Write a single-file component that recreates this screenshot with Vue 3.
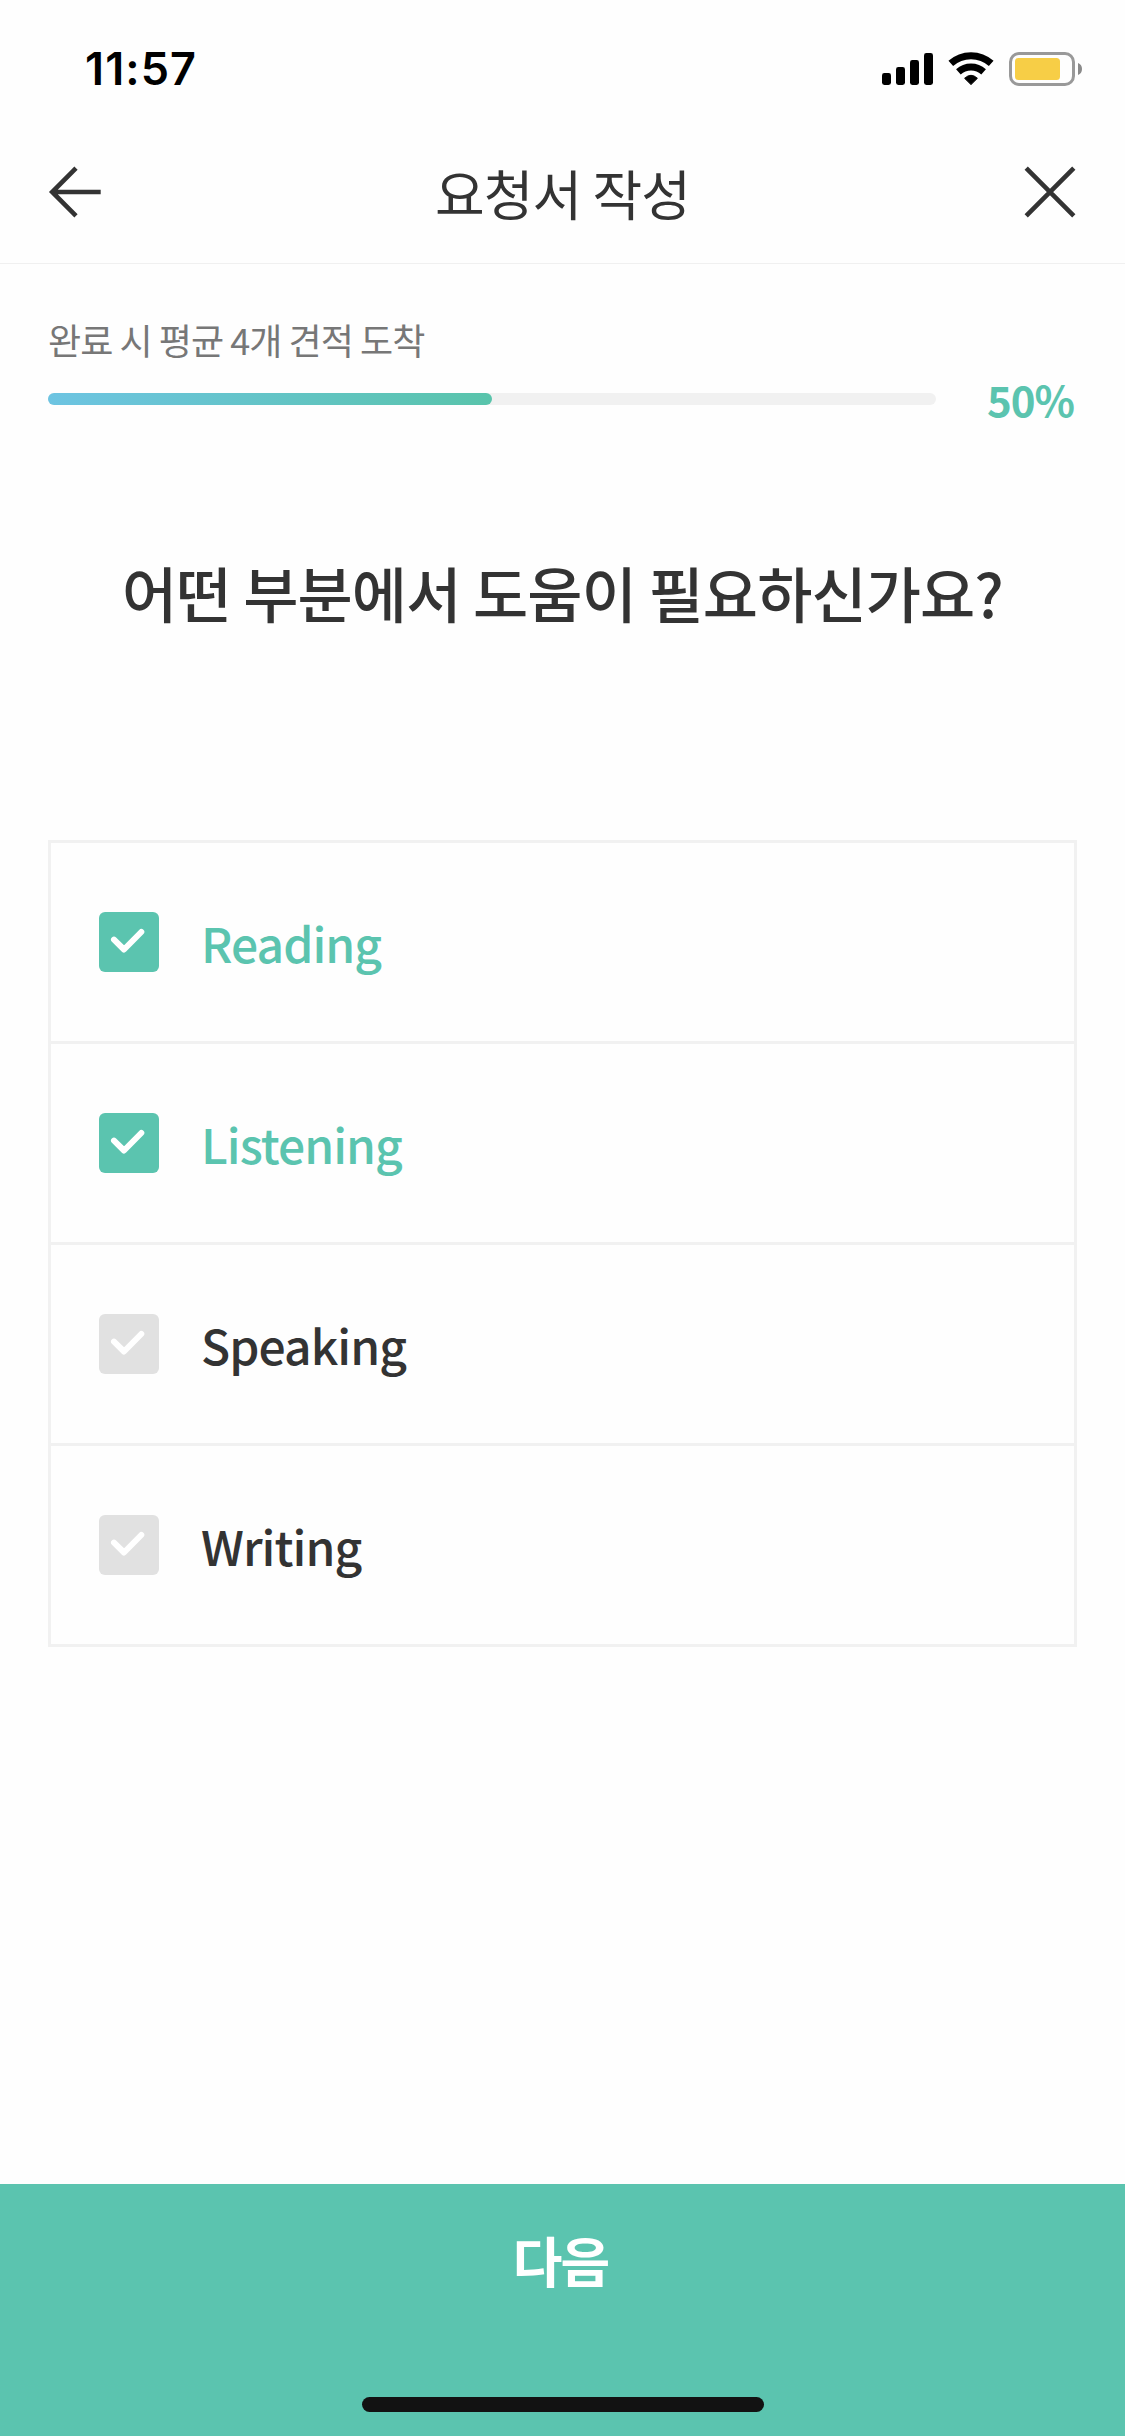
<script setup>
import { ref } from 'vue'

const progress = ref(50)
const options = ref([
  { label: 'Reading', checked: true },
  { label: 'Listening', checked: true },
  { label: 'Speaking', checked: false },
  { label: 'Writing', checked: false },
])
</script>

<template>
  <div class="screen">
    <div class="status">
      <span class="time">11:57</span>
      <svg class="indicators" width="202" height="36" viewBox="881 51 202 36">
        <rect x="882" y="73" width="9" height="12" rx="2.4" />
        <rect x="896" y="67" width="9" height="18" rx="2.4" />
        <rect x="910" y="60" width="9" height="25" rx="2.4" />
        <rect x="924" y="53" width="9" height="32" rx="2.4" />
        <g fill="none" stroke="#000" stroke-width="7">
          <path d="M950.8 63.4A30.2 30.2 0 0 1 991.2 63.4" />
          <path d="M958.4 71.9A19 19 0 0 1 983.6 71.9" />
        </g>
        <path d="M971 84.6L964.6 78.3Q971 72.3 977.4 78.3Z" stroke="#000" stroke-width="1" stroke-linejoin="round" />
        <rect x="1010.5" y="53.5" width="63" height="31" rx="8.5" fill="none" stroke="#999" stroke-width="3" />
        <rect x="1015" y="58" width="45" height="22" rx="3.5" fill="#f7ce46" />
        <path d="M1078 63Q1082 64.500 1082 69T1078 75Z" fill="#8a8a8a" />
      </svg>
    </div>

    <header class="nav">
      <svg width="54" height="54" viewBox="0 0 54 54">
        <path d="M28 3.200L4.200 27L28 50.800M4.500 27H52.700" fill="none" stroke="#333" stroke-width="4.600" />
      </svg>
      <h1>요청서 작성</h1>
      <svg width="54" height="54" viewBox="0 0 54 54">
        <path d="M3.200 3.200L50.800 50.800M50.800 3.200L3.200 50.800" fill="none" stroke="#333" stroke-width="4.600" />
      </svg>
    </header>

    <section class="progress">
      <p class="note">완료 시 평균 4개 견적 도착</p>
      <div class="meter">
        <div class="track"><div class="fill" :style="{ width: progress + '%' }"></div></div>
        <span class="percent">{{ progress }}%</span>
      </div>
    </section>

    <h2>어떤 부분에서 도움이 필요하신가요?</h2>

    <ul class="options">
      <li
        v-for="option in options"
        :key="option.label"
        :class="{ checked: option.checked }"
        @click="option.checked = !option.checked"
      >
        <svg class="box" width="60" height="60" viewBox="0 0 60 60">
          <rect class="square" width="60" height="60" rx="6" />
          <path d="M15 27.700L25 37.500L42.300 20" fill="none" stroke="#fff" stroke-width="6" stroke-linecap="round" stroke-linejoin="round" />
        </svg>
        <span class="label">{{ option.label }}</span>
      </li>
    </ul>

    <footer>
      <button type="button">다음</button>
      <div class="home"></div>
    </footer>
  </div>
</template>

<style>
body {
  margin: 0;
  background: #fefefe;
}
</style>

<style scoped>
.screen {
  display: flex;
  flex-direction: column;
  width: 1125px;
  height: 2436px;
  background: #fefefe;
  color: #333;
  font-family: 'Noto Sans CJK KR', sans-serif;
}
.status {
  display: flex;
  justify-content: space-between;
  align-items: center;
  box-sizing: border-box;
  height: 132px;
  padding: 6px 42px 0 85px;
}
.time {
  font: 600 45px/54px Inter, sans-serif;
  letter-spacing: 1.1px;
  color: #000;
}
.nav {
  display: flex;
  justify-content: space-between;
  align-items: center;
  box-sizing: border-box;
  height: 132px;
  padding: 0 48px 11px;
  border-bottom: 1px solid #f0f0f0;
}
h1 {
  margin: 2px 0 0;
  font-size: 54px;
  line-height: 80px;
  font-weight: 400;
  letter-spacing: -0.9px;
}
.progress {
  padding: 48px 48px 0;
}
.note {
  margin: 0;
  font-size: 36px;
  line-height: 54px;
  letter-spacing: -0.95px;
  color: #777;
}
.meter {
  display: flex;
  align-items: center;
  justify-content: space-between;
  height: 66px;
}
.track {
  width: 888px;
  height: 12px;
  border-radius: 6px;
  background: #f1f1f1;
}
.fill {
  height: 12px;
  border-radius: 6px;
  background: linear-gradient(90deg, #6dc4e2, #59c4ab);
}
.percent {
  padding-right: 3px;
  font-size: 42px;
  line-height: 60px;
  font-weight: 700;
  letter-spacing: -1px;
  color: #5bc4af;
}
h2 {
  margin: 116px 0 0;
  font-size: 60px;
  line-height: 88px;
  font-weight: 500;
  text-align: center;
  letter-spacing: -0.9px;
}
.options {
  margin: 204px 48px 0;
  padding: 0;
  list-style: none;
  border: 3px solid #f1f1f1;
}
li {
  display: flex;
  align-items: center;
  gap: 42px;
  height: 198px;
  padding-left: 48px;
}
li + li {
  border-top: 3px solid #f1f1f1;
}
.square {
  fill: #e1e1e1;
}
.label {
  font-size: 48px;
  line-height: 72px;
  font-weight: 500;
  letter-spacing: -0.96px;
}
.checked .square {
  fill: #5bc4af;
}
.checked .label {
  color: #5bc4af;
}
footer {
  display: flex;
  flex-direction: column;
  align-items: center;
  justify-content: space-between;
  box-sizing: border-box;
  height: 252px;
  margin-top: auto;
  padding: 36px 0 24px;
  background: #5bc4af;
}
button {
  padding: 0 4px 0 0;
  border: 0;
  background: none;
  color: #fff;
  font: 700 54px/80px 'Noto Sans CJK KR', sans-serif;
  letter-spacing: -2px;
}
.home {
  width: 402px;
  height: 15px;
  border-radius: 8px;
  background: #121212;
}
</style>
